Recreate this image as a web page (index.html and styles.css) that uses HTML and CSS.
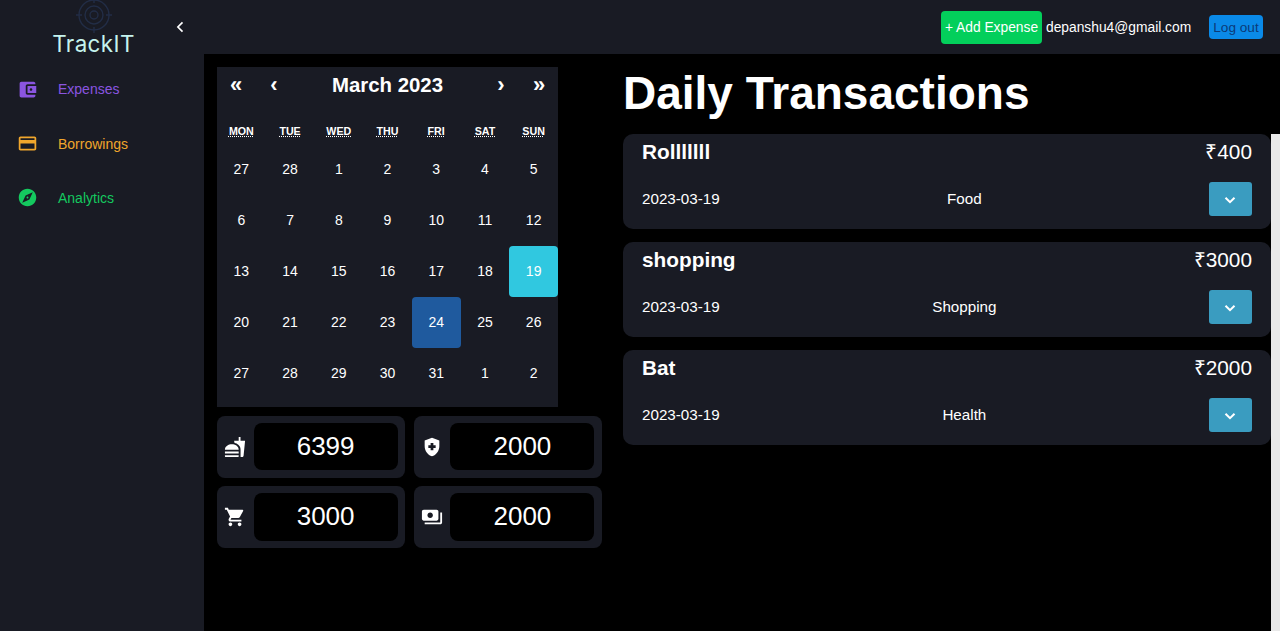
FILE: index.html
```html
<!DOCTYPE html>
<html lang="en">
<head>
    <meta charset="UTF-8">
    <title>TrackIT</title>
    <link rel="stylesheet" href="styles.css">
</head>
<body>
    <div class="app">
        <!-- sidebar -->
        <aside class="sidebar">
            <div class="brand">
                <svg class="brand-logo" viewBox="0 0 36 36" fill="none" stroke="#222d46" stroke-width="1.4">
                    <circle cx="18" cy="18" r="15"/>
                    <circle cx="18" cy="18" r="9"/>
                    <circle cx="18" cy="18" r="4"/>
                    <path d="M18 0v6M18 30v6M0 18h6M30 18h6"/>
                </svg>
                <div class="brand-name">TrackIT</div>
                <svg class="collapse" viewBox="0 0 12 16" fill="none" stroke="#fff" stroke-width="2"><path d="M9 2.5 3.5 8 9 13.5"/></svg>
            </div>
            <nav class="menu">
                <a class="menu-item purple">
                    <svg viewBox="0 0 24 24"><path d="M21 18v1c0 1.1-.9 2-2 2H5c-1.11 0-2-.9-2-2V5c0-1.1.89-2 2-2h14c1.1 0 2 .9 2 2v1h-9c-1.11 0-2 .9-2 2v8c0 1.1.89 2 2 2h9zm-9-2h10V8H12v8zm4-2.5c-.83 0-1.5-.67-1.5-1.5s.67-1.5 1.5-1.5 1.5.67 1.5 1.5-.67 1.5-1.5 1.5z"/></svg>
                    <span>Expenses</span>
                </a>
                <a class="menu-item orange">
                    <svg viewBox="0 0 24 24"><path d="M20 4H4c-1.11 0-1.99.89-1.99 2L2 18c0 1.11.89 2 2 2h16c1.11 0 2-.89 2-2V6c0-1.11-.89-2-2-2zm0 14H4v-6h16v6zm0-10H4V6h16v2z"/></svg>
                    <span>Borrowings</span>
                </a>
                <a class="menu-item green">
                    <svg viewBox="0 0 24 24"><path d="M12 10.9c-.61 0-1.1.49-1.1 1.1s.49 1.1 1.1 1.1c.61 0 1.1-.49 1.1-1.1s-.49-1.1-1.1-1.1zM12 2C6.48 2 2 6.48 2 12s4.48 10 10 10 10-4.48 10-10S17.52 2 12 2zm2.19 12.19L6 18l3.81-8.19L18 6l-3.81 8.19z"/></svg>
                    <span>Analytics</span>
                </a>
            </nav>
        </aside>

        <div class="main">
            <header class="topbar">
                <button class="add-btn">+ Add Expense</button>
                <span class="email">depanshu4@gmail.com</span>
                <button class="logout-btn">Log out</button>
            </header>

            <div class="content">
                <div class="left-col">
                    <div class="calendar">
                        <div class="cal-nav">
                            <span class="cal-arrow">«</span>
                            <span class="cal-arrow">‹</span>
                            <span class="cal-title">March 2023</span>
                            <span class="cal-arrow">›</span>
                            <span class="cal-arrow">»</span>
                        </div>
                        <div class="cal-weekdays">
                            <abbr>MON</abbr><abbr>TUE</abbr><abbr>WED</abbr><abbr>THU</abbr><abbr>FRI</abbr><abbr>SAT</abbr><abbr>SUN</abbr>
                        </div>
                        <div class="cal-days">
                            <span>27</span><span>28</span><span>1</span><span>2</span><span>3</span><span>4</span><span>5</span>
                            <span>6</span><span>7</span><span>8</span><span>9</span><span>10</span><span>11</span><span>12</span>
                            <span>13</span><span>14</span><span>15</span><span>16</span><span>17</span><span>18</span><span class="today">19</span>
                            <span>20</span><span>21</span><span>22</span><span>23</span><span class="selected">24</span><span>25</span><span>26</span>
                            <span>27</span><span>28</span><span>29</span><span>30</span><span>31</span><span>1</span><span>2</span>
                        </div>
                    </div>

                    <div class="stats">
                        <div class="stat">
                            <svg viewBox="0 0 24 24"><path d="M18.06 22.99h1.66c.84 0 1.53-.64 1.63-1.46L23 5.05h-5V1h-1.97v4.05h-4.97l.3 2.34c1.71.47 3.31 1.32 4.27 2.26 1.44 1.42 2.43 2.89 2.43 5.29v8.05zM1 21.99V21h15.03v.99c0 .55-.45 1-1.01 1H2.01c-.56 0-1.01-.45-1.01-1zm15.03-7c.04-4-4.03-6-7.52-6C5 8.99 1 11 1 15h15.03zM1.02 17h15v2h-15z"/></svg>
                            <div class="stat-value">6399</div>
                        </div>
                        <div class="stat">
                            <svg viewBox="0 0 24 24"><path d="M10.5 13H8v-3h2.5V7.5h3V10H16v3h-2.5v2.5h-3V13zM12 2L4 5v6.09c0 5.05 3.41 9.76 8 10.91 4.59-1.15 8-5.86 8-10.91V5l-8-3z"/></svg>
                            <div class="stat-value">2000</div>
                        </div>
                        <div class="stat">
                            <svg viewBox="0 0 24 24"><path d="M7 18c-1.1 0-1.99.9-1.99 2S5.9 22 7 22s2-.9 2-2-.9-2-2-2zM1 2v2h2l3.6 7.59-1.35 2.45c-.16.28-.25.61-.25.96 0 1.1.9 2 2 2h12v-2H7.42c-.14 0-.25-.11-.25-.25l.03-.12.9-1.63h7.45c.75 0 1.41-.41 1.75-1.03l3.58-6.49c.08-.14.12-.31.12-.48 0-.55-.45-1-1-1H5.21l-.94-2H1zm16 16c-1.1 0-1.99.9-1.99 2s.89 2 1.99 2 2-.9 2-2-.9-2-2-2z"/></svg>
                            <div class="stat-value">3000</div>
                        </div>
                        <div class="stat">
                            <svg viewBox="0 0 24 24"><path d="M19 14V6c0-1.1-.9-2-2-2H3c-1.1 0-2 .9-2 2v8c0 1.1.9 2 2 2h14c1.1 0 2-.9 2-2zm-9-1c-1.66 0-3-1.34-3-3s1.34-3 3-3 3 1.34 3 3-1.34 3-3 3zm13-6v11c0 1.1-.9 2-2 2H4v-2h17V7h2z"/></svg>
                            <div class="stat-value">2000</div>
                        </div>
                    </div>
                </div>

                <div class="right-col">
                    <h1 class="page-title">Daily Transactions</h1>
                    <div class="list-wrap">
                        <div class="list">
                            <div class="card">
                                <div class="card-top"><span class="card-name">Rolllllll</span><span class="card-amount">₹400</span></div>
                                <div class="card-bottom">
                                    <span class="card-date">2023-03-19</span>
                                    <span class="card-cat">Food</span>
                                    <button class="expand-btn"><svg viewBox="0 0 12 8" fill="none" stroke="#fff" stroke-width="1.8"><path d="M2 1.5 6 5.5 10 1.5"/></svg></button>
                                </div>
                            </div>
                            <div class="card">
                                <div class="card-top"><span class="card-name">shopping</span><span class="card-amount">₹3000</span></div>
                                <div class="card-bottom">
                                    <span class="card-date">2023-03-19</span>
                                    <span class="card-cat">Shopping</span>
                                    <button class="expand-btn"><svg viewBox="0 0 12 8" fill="none" stroke="#fff" stroke-width="1.8"><path d="M2 1.5 6 5.5 10 1.5"/></svg></button>
                                </div>
                            </div>
                            <div class="card">
                                <div class="card-top"><span class="card-name">Bat</span><span class="card-amount">₹2000</span></div>
                                <div class="card-bottom">
                                    <span class="card-date">2023-03-19</span>
                                    <span class="card-cat">Health</span>
                                    <button class="expand-btn"><svg viewBox="0 0 12 8" fill="none" stroke="#fff" stroke-width="1.8"><path d="M2 1.5 6 5.5 10 1.5"/></svg></button>
                                </div>
                            </div>
                        </div>
                        <div class="scroll-track"></div>
                    </div>
                </div>
            </div>
        </div>
    </div>
</body>
</html>
```

FILE: styles.css
```css
* {
    margin: 0;
    padding: 0;
    box-sizing: border-box;
}
html, body {
    height: 100%;
    overflow: hidden;
}
body {
    background: #000;
    color: #fff;
    font-family: "Liberation Sans", Arial, sans-serif;
}
button {
    font-family: inherit;
    border: none;
}
.app {
    display: flex;
    height: 100%;
}

/* sidebar */
.sidebar {
    width: 204px;
    flex-shrink: 0;
    background: #191b24;
}
.brand {
    position: relative;
    height: 62px;
    display: flex;
    flex-direction: column;
    align-items: center;
    padding-right: 17px;
}
.brand-logo {
    width: 36px;
    height: 36px;
    margin-top: -3px;
}
.brand-name {
    font-family: Inter, sans-serif;
    font-weight: 400;
    font-size: 22.4px;
    line-height: 26px;
    margin-top: -2px;
    color: #c5f3ee;
    letter-spacing: 0.4px;
}
.collapse {
    position: absolute;
    top: 20px;
    left: 175px;
    width: 10px;
    height: 14px;
}
.menu {
    display: flex;
    flex-direction: column;
}
.menu-item {
    display: flex;
    align-items: center;
    height: 54.4px;
    font-size: 14px;
    padding-left: 17px;
}
.menu-item svg {
    width: 21px;
    height: 21px;
    fill: currentColor;
    margin-right: 20px;
}
.purple { color: #8a55e0; }
.orange { color: #f0a62c; }
.green { color: #14c95f; }

/* top bar */
.main {
    flex: 1;
    display: flex;
    flex-direction: column;
    min-width: 0;
}
.topbar {
    height: 54px;
    background: #191b24;
    display: flex;
    align-items: center;
    justify-content: flex-end;
    padding: 0 17px 0 0;
}
.add-btn {
    width: 101px;
    height: 33px;
    border-radius: 4px;
    background: #03cf5b;
    color: #fff;
    font-size: 13.8px;
}
.email {
    font-size: 13.8px;
    margin-left: 4px;
    width: 163px;
}
.logout-btn {
    width: 54px;
    height: 24px;
    border-radius: 4px;
    background: #0a8ae8;
    color: #0b3a78;
    font-size: 13.6px;
}

/* content */
.content {
    flex: 1;
    display: flex;
    min-height: 0;
    padding-left: 13px;
}
.left-col {
    width: 406px;
    flex-shrink: 0;
    padding-top: 13px;
}
.calendar {
    width: 341px;
    height: 340px;
    background: #191b24;
}
.cal-nav {
    display: grid;
    grid-template-columns: 38px 38px 1fr 38px 38px;
    height: 36px;
    align-items: center;
    text-align: center;
}
.cal-arrow {
    font-size: 22px;
    font-weight: bold;
}
.cal-title {
    font-size: 20.4px;
    font-weight: bold;
}
.cal-weekdays {
    display: grid;
    grid-template-columns: repeat(7, 1fr);
    height: 41px;
    align-items: end;
    text-align: center;
    padding-bottom: 7px;
    font-size: 10.7px;
    font-weight: bold;
}
.cal-weekdays abbr {
    text-decoration: underline dotted;
}
.cal-days {
    display: grid;
    grid-template-columns: repeat(7, 1fr);
    grid-auto-rows: 51px;
    font-size: 14px;
}
.cal-days span {
    display: flex;
    align-items: center;
    justify-content: center;
    border-radius: 4px;
    padding-bottom: 2px;
}
.cal-days .today {
    background: #30c8e0;
}
.cal-days .selected {
    background: #1f5a9e;
}
.stats {
    display: grid;
    grid-template-columns: 187.8px 187.8px;
    grid-auto-rows: 62px;
    gap: 8.4px 9px;
    margin-top: 9px;
}
.stat {
    display: flex;
    align-items: center;
    background: #191b24;
    border-radius: 8px;
    padding: 0 7.2px 1px 7px;
}
.stat svg {
    width: 22px;
    height: 22px;
    fill: #fff;
    margin-right: 7.6px;
    flex-shrink: 0;
}
.stat-value {
    flex: 1;
    height: 47.5px;
    background: #000;
    border-radius: 8px;
    font-size: 26px;
    display: flex;
    align-items: center;
    justify-content: center;
}

/* transactions */
.right-col {
    flex: 1;
    display: flex;
    flex-direction: column;
    min-width: 0;
}
.page-title {
    font-size: 46px;
    line-height: 55px;
    height: 80px;
    padding-top: 12px;
}
.list-wrap {
    flex: 1;
    display: flex;
    justify-content: space-between;
    min-height: 0;
}
.list {
    width: 648px;
    display: flex;
    flex-direction: column;
    gap: 13px;
}
.scroll-track {
    width: 9px;
    background: #e9e9e9;
}
.card {
    height: 95px;
    background: #191b24;
    border-radius: 10px;
    padding: 0 19px;
}
.card-top {
    display: flex;
    justify-content: space-between;
    align-items: center;
    height: 35px;
}
.card-name {
    font-size: 20.8px;
    font-weight: bold;
}
.card-amount {
    font-size: 20.8px;
    padding-bottom: 2px;
}
.card-bottom {
    display: flex;
    justify-content: space-between;
    align-items: center;
    margin-top: 13px;
    font-size: 15.2px;
}
.card-bottom span {
    padding-bottom: 2px;
}
.expand-btn {
    width: 43px;
    height: 34px;
    background: #3a9cc0;
    border-radius: 3px;
    display: flex;
    align-items: center;
    justify-content: center;
    padding-top: 2px;
}
.expand-btn svg {
    width: 14px;
    height: 9px;
}
```
